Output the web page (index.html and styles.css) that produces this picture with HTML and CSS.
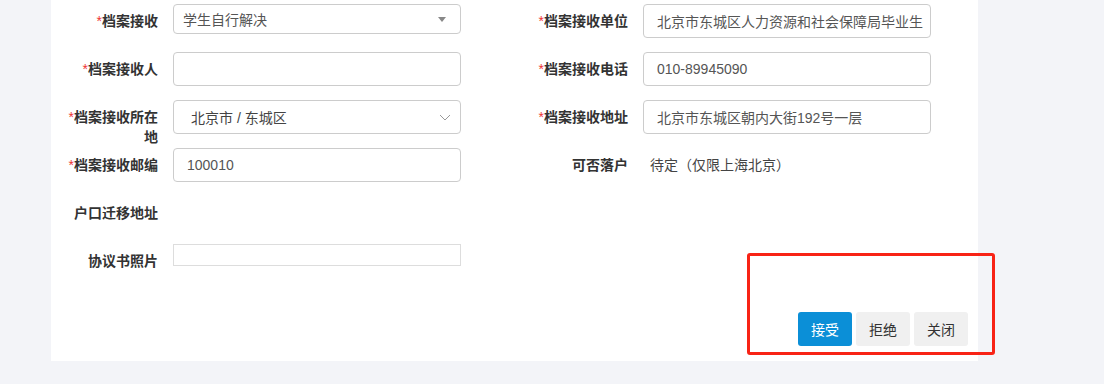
FILE: index.html
```html
<!DOCTYPE html>
<html>
	<head>
		<meta charset="utf-8" />
		<title>档案接收</title>
		<link rel="stylesheet" href="styles.css">
	</head>
	<body>
		<div class="page">
			<form class="panel">
				<div class="form-grid">
					<div class="item">
						<label class="label"><span class="req">*</span>档案接收</label>
						<div class="select">
							<span>学生自行解决</span>
							<svg class="caret" width="8" height="5" viewBox="0 0 8 5"><path d="M0 0H8L4 5Z" fill="#888"/></svg>
						</div>
					</div>
					<div class="item">
						<label class="label"><span class="req">*</span>档案接收单位</label>
						<input class="control" type="text" value="北京市东城区人力资源和社会保障局毕业生">
					</div>
					<div class="item">
						<label class="label"><span class="req">*</span>档案接收人</label>
						<input class="control" type="text" value="">
					</div>
					<div class="item">
						<label class="label"><span class="req">*</span>档案接收电话</label>
						<input class="control" type="text" value="010-89945090">
					</div>
					<div class="item">
						<label class="label"><span class="req">*</span>档案接收所在地</label>
						<div class="cascader">
							<span>北京市 / 东城区</span>
							<svg class="chevron" width="12" height="7" viewBox="0 0 12 7"><path d="M1 1L6 6L11 1" fill="none" stroke="#999" stroke-width="1"/></svg>
						</div>
					</div>
					<div class="item">
						<label class="label"><span class="req">*</span>档案接收地址</label>
						<input class="control" type="text" value="北京市东城区朝内大街192号一层">
					</div>
					<div class="item">
						<label class="label"><span class="req">*</span>档案接收邮编</label>
						<input class="control" type="text" value="100010">
					</div>
					<div class="item">
						<label class="label">可否落户</label>
						<span class="value">待定（仅限上海北京）</span>
					</div>
					<div class="item">
						<label class="label">户口迁移地址</label>
					</div>
					<div class="item"></div>
					<div class="item">
						<label class="label">协议书照片</label>
						<div class="photo"></div>
					</div>
				</div>
				<div class="footer">
					<button type="button" class="btn btn-primary">接受</button>
					<button type="button" class="btn">拒绝</button>
					<button type="button" class="btn">关闭</button>
				</div>
			</form>
			<div class="mark"></div>
		</div>
	</body>
</html>
```

FILE: styles.css
```css
body
{
	margin: 0;
	background: #f3f4f8;
	font-family: "Liberation Sans", "Noto Sans CJK SC", sans-serif;
	font-size: 14px;
	color: #333;
}
.page
{
	position: relative;
	padding-left: 51px;
	height: 384px;
}
.panel
{
	width: 927px;
	background: #fff;
	padding: 4px 0 15px 0;
}
.form-grid
{
	display: grid;
	grid-template-columns: 470px 457px;
	grid-auto-rows: 34px;
	row-gap: 14px;
}
.item
{
	display: flex;
	align-items: flex-start;
}
.label
{
	width: 96px;
	padding: 7px 15px 0 11px;
	flex-shrink: 0;
	text-align: right;
	line-height: 20px;
	font-weight: bold;
	color: #333;
}
.req
{
	color: #e33;
	font-weight: normal;
}
.control
{
	box-sizing: border-box;
	width: 288px;
	height: 34px;
	padding: 0 2px 0 13px;
	border: 1px solid #ccc;
	border-radius: 4px;
	font-family: inherit;
	font-size: 14px;
	color: #555;
	outline: none;
}
.select
{
	box-sizing: border-box;
	width: 288px;
	height: 30px;
	padding: 0 14px 0 9px;
	border: 1px solid #ccc;
	border-radius: 4px;
	display: flex;
	align-items: center;
	justify-content: space-between;
	color: #555;
}
.cascader
{
	box-sizing: border-box;
	width: 288px;
	height: 34px;
	padding: 0 9px 0 17px;
	border: 1px solid #ccc;
	border-radius: 4px;
	display: flex;
	align-items: center;
	justify-content: space-between;
	color: #444;
}
.value
{
	padding-left: 7px;
	line-height: 34px;
	color: #444;
}
.photo
{
	width: 286px;
	height: 20px;
	border: 1px solid #ddd;
}
.footer
{
	display: flex;
	justify-content: flex-end;
	gap: 4px;
	margin-top: 34px;
	padding-right: 10px;
}
.btn
{
	width: 54px;
	height: 34px;
	border: none;
	border-radius: 3px;
	background: #f0f0f0;
	color: #333;
	font-family: inherit;
	font-size: 14px;
}
.btn-primary
{
	background: #0b8fd7;
	color: #fff;
}
.mark
{
	position: absolute;
	left: 747px;
	top: 253px;
	width: 242px;
	height: 96px;
	border: 3px solid #f82316;
	border-radius: 3px;
}
```
